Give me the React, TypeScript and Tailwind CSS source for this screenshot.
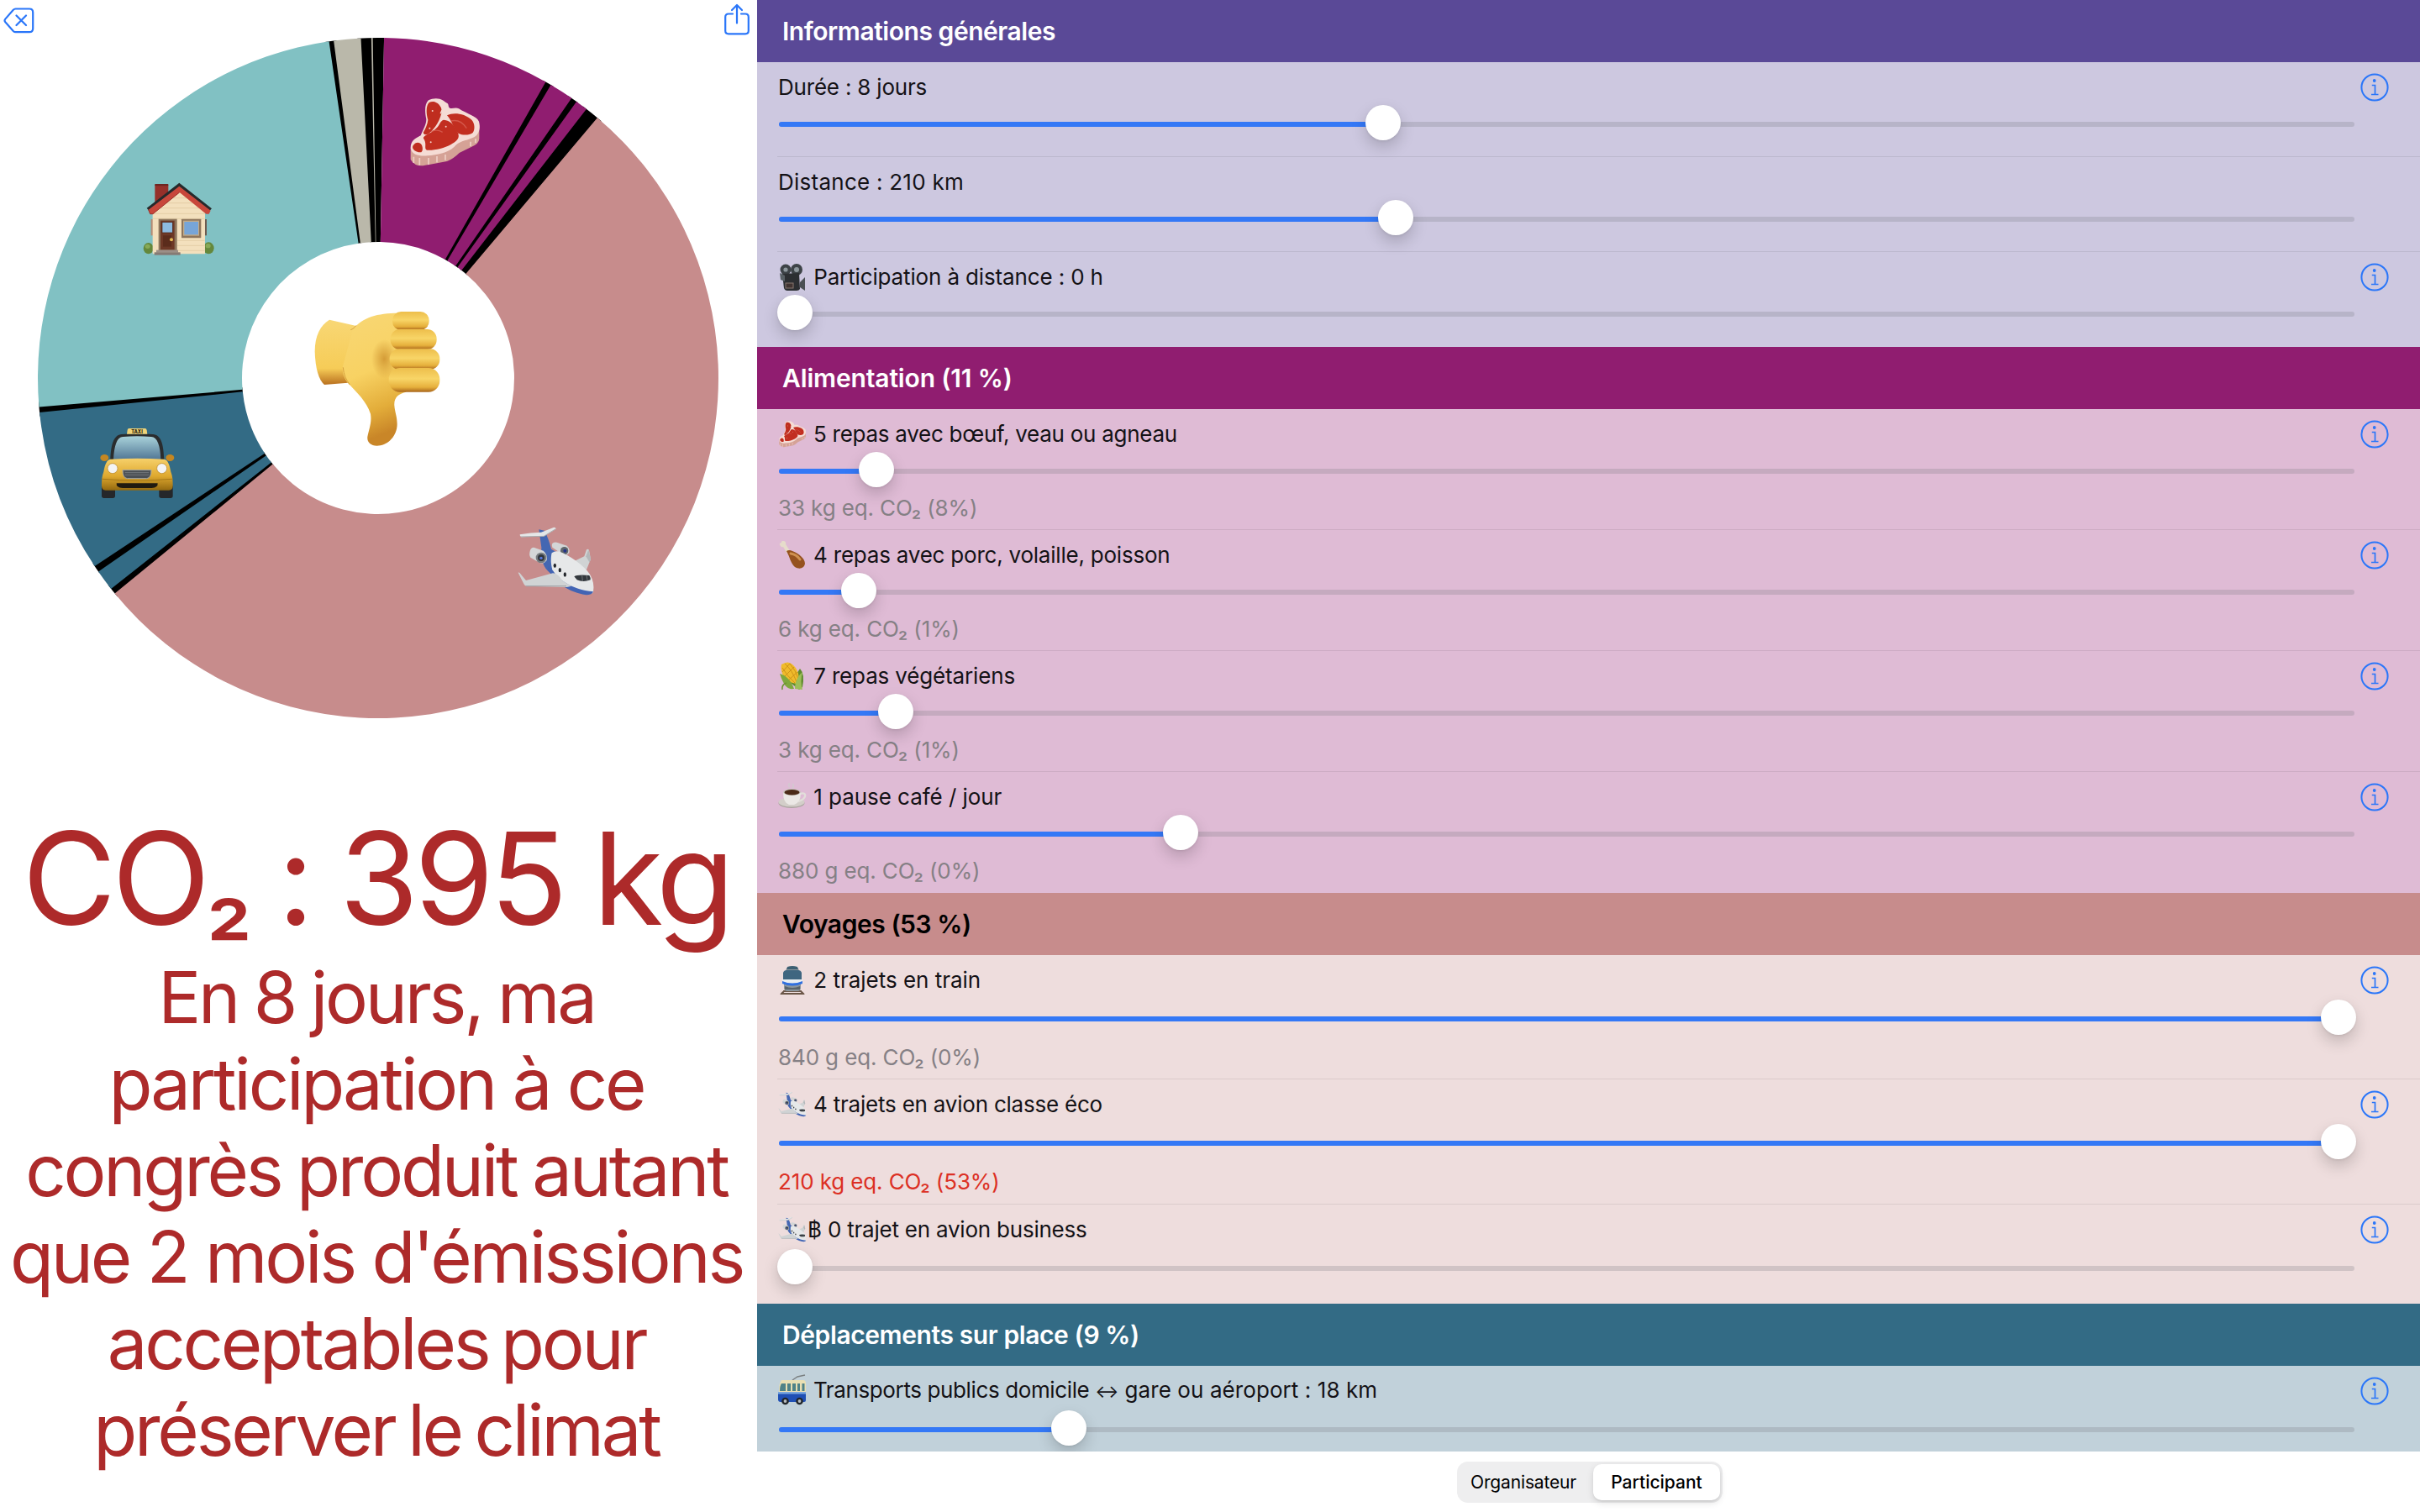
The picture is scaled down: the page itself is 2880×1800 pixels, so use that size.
import type { ReactNode } from 'react';

/* ---------- Emoji artwork ---------- */

function House() {
  return (
    <g>
      <ellipse cx="200" cy="272" rx="18" ry="20" fill="#64883c" />
      <ellipse cx="415" cy="271" rx="19" ry="21" fill="#64883c" />
      <ellipse cx="197" cy="265" rx="9" ry="8" fill="#86a957" />
      <ellipse cx="413" cy="263" rx="9" ry="8" fill="#86a957" />
      <rect x="223" y="42" width="48" height="70" rx="3" fill="#96302a" />
      <rect x="223" y="42" width="48" height="7" rx="3" fill="#6d2521" />
      <path d="M209 168h8v58h-8z" fill="#b58a72" />
      <path d="M401 168h7v58h-7z" fill="#6d5b4f" />
      <path d="M215 292V140L311 62l91 78v152z" fill="#f3e0bd" />
      <path d="M280 92h60M258 110h104M236 128h150M216 148h185M216 166h185M303 244h98M303 262h98M303 280h98" stroke="#dcc59c" strokeWidth="2" />
      <path d="M194 128L310 38l116 92-8 8L310 56 202 138z" fill="#26292b" />
      <path d="M200 134L310 50l112 87-6 12h-10L311 72 216 149h-10z" fill="#c8473b" />
      <path d="M200 134l6 15h10L311 72" fill="none" stroke="#9c2f28" strokeWidth="3" />
      <rect x="236" y="167" width="66" height="112" fill="#8d755c" />
      <rect x="243" y="173" width="50" height="104" fill="#6d3826" />
      <rect x="249" y="179" width="37" height="37" fill="#8dbbe0" stroke="#4e2619" strokeWidth="2" />
      <rect x="252" y="226" width="30" height="40" fill="#5b2c1c" />
      <circle cx="282" cy="241" r="6" fill="#e5bb55" />
      <rect x="228" y="278" width="78" height="9" fill="#9c8f88" />
      <rect x="221" y="286" width="93" height="10" fill="#867a74" />
      <rect x="318" y="167" width="70" height="68" rx="2" fill="#8d755c" />
      <rect x="324" y="173" width="57" height="54" fill="#c5ab86" />
      <rect x="328" y="177" width="50" height="46" fill="#77a5d8" />
    </g>
  );
}

function Taxi() {
  return (
    <g>
      <defs>
        <linearGradient id="taxiGlass" x1="0" y1="0" x2="0" y2="1">
          <stop offset="0" stopColor="#a9d2da" />
          <stop offset="1" stopColor="#517795" />
        </linearGradient>
        <linearGradient id="taxiBody" x1="0" y1="0" x2="0" y2="1">
          <stop offset="0" stopColor="#f6d06a" />
          <stop offset="0.55" stopColor="#dfa92f" />
          <stop offset="1" stopColor="#94690f" />
        </linearGradient>
      </defs>
      <rect x="33" y="1115" width="48" height="49" rx="8" fill="#25272a" />
      <rect x="238" y="1115" width="49" height="49" rx="8" fill="#25272a" />
      <ellipse cx="43" cy="1020" rx="15" ry="12" fill="#c58722" />
      <ellipse cx="277" cy="1020" rx="15" ry="12" fill="#c58722" />
      <path d="M64 1028C66 968 78 938 104 936q56-5 112 0c28 2 38 32 40 92z" fill="#2a2c2e" />
      <path d="M75 1026c3-50 12-80 34-81q50-4 101 0c22 1 32 31 34 81z" fill="url(#taxiGlass)" />
      <path d="M40 1070c4-26 12-44 24-45q96-5 192 0c12 1 20 19 24 45 6 14 7 30 7 50 0 10-5 16-14 16H47c-9 0-14-6-14-16 0-20 1-36 7-50z" fill="url(#taxiBody)" />
      <path d="M34 1096q126 10 252 0" fill="none" stroke="#a87818" strokeWidth="3" />
      <circle cx="72" cy="1058" r="18" fill="#f4f4f4" stroke="#b4832a" strokeWidth="2" />
      <circle cx="248" cy="1058" r="18" fill="#f4f4f4" stroke="#b4832a" strokeWidth="2" />
      <path d="M108 1064h102q0 28-16 30h-70q-16-2-16-30z" fill="#4b5055" stroke="#a2a5a7" strokeWidth="3" />
      <path d="M116 1073h86M117 1081h84" stroke="#85898c" strokeWidth="2" />
      <path d="M86 1111h147q2 16-22 17H108q-24-1-22-17z" fill="#201a10" />
      <path d="M130 915h58q5 0 6 6l2 14h-73l2-14q1-6 5-6z" fill="#f1d478" />
      <text x="159" y="933" textAnchor="middle" fontFamily="Inter, sans-serif" fontSize="17" fontWeight="800" fill="#2b2410">TAXI</text>
    </g>
  );
}

function Steak() {
  return (
    <g>
      <path d="M86 258v42q14 24 44 22l86-16q22-8 44-30l44-22q26-10 27-28v-50l-40 30z" fill="#d5a296" />
      <path d="M97 290v22M118 294v26M150 294v24M180 288v22M210 282v20M300 236v16M318 226v14" stroke="#efcfc6" strokeWidth="5" />
      <path d="M150 88c14-8 40-8 50 0 8 4 10 8 16 10 8 4 2 12 10 18 10 4 20-4 32 2 28 18 66 28 72 46 6 22 2 48-22 58-28 12-50 12-66 32-26 24-60 28-96 32-24 2-56 0-60-28 0-26 18-34 36-44 10-24 20-40 20-58-6-28-6-56 8-68z" fill="#f5dcd5" />
      <path d="M152 96c14-6 34-4 46 26-4 36-24 66-48 86-12 6-20 2-18-6 8-14 14-28 16-44-8-26-6-52 4-62z" fill="#bf2d1f" />
      <path d="M184 92c10 8 16 20 15 30l-6 14" fill="none" stroke="#f5dcd5" strokeWidth="5" />
      <path d="M204 158c24 2 36 18 42 32 22 28 10 42-16 56-24 14-62 22-86 20-12-6 2-22-12-42-4-10 30-18 44-34 14-12 16-30 28-32z" fill="#c22e20" />
      <path d="M216 142c24-12 64-6 88 16 12 14 12 34 4 46-14 10-36 10-52 2-18-18-22-44-40-64z" fill="#c22e20" />
      <path d="M230 162q34-8 56 26M160 200q20-10 40 2" fill="none" stroke="#d4574a" strokeWidth="4" />
      <path d="M98 246c8-10 22-8 28 2 4 10 4 20-2 26-14 0-24-4-30-14-2-6 0-10 4-14z" fill="#bf2d1f" />
      <g fill="#f3cfc7">
        <circle cx="158" cy="238" r="3" />
        <circle cx="212" cy="182" r="3" />
        <circle cx="154" cy="188" r="3" />
        <circle cx="164" cy="126" r="3" />
      </g>
    </g>
  );
}

function Plane() {
  return (
    <g>
      <path d="M172 96q4-6 16-4l36 12q12 12 8 26-10 12-22 6l-38-26q-4-6 0-14z" fill="#d3d5d6" />
      <circle cx="215" cy="122" r="14" fill="#5f666c" />
      <circle cx="217" cy="122" r="6" fill="#25348a" />
      <path d="M252 158l34-16 8-24q6-4 9 2l6 32-16 40z" fill="#d0d3d4" />
      <path d="M292 142l9-24 8 32-4 14z" fill="#b4b8ba" />
      <path d="M124 46l20 4c10 20 18 40 24 66l24 14 12 96-40-24c-22-20-34-42-31-92z" fill="#4467b2" />
      <path d="M56 64q40-8 76-8l46-18q8 2 7 6l-42 26-82 3q-6-4-5-9z" fill="#e4e6e7" />
      <path d="M60 72l82-2 42-26" fill="none" stroke="#a9adb0" strokeWidth="3" />
      <path d="M170 130q10-8 24-6c40 14 90 50 112 82q18 30 12 64-8 10-30 8c-48-12-88-44-116-88-6-22-6-44-2-60z" fill="#e6e8e9" />
      <path d="M160 178c28 44 80 84 158 90q-4 12-24 12c-60-8-116-44-138-96z" fill="#4264b4" />
      <path d="M50 200q4-2 6 2l22 26 96-26q16 0 36 28l30 18-16 4-144-4q-8-2-10-8z" fill="#d0d3d4" />
      <path d="M78 248h144" stroke="#a4a8ab" strokeWidth="4" />
      <path d="M250 214q10-8 54-4 6 10 4 16-26 10-48 0z" fill="#33383d" />
      <path d="M278 210l2 20M294 209l3 18" stroke="#8c9194" strokeWidth="2" />
      <g fill="#23272c">
        <ellipse cx="181" cy="175" rx="5" ry="8" />
        <ellipse cx="199" cy="191" rx="5" ry="8" />
        <ellipse cx="217" cy="207" rx="5" ry="8" />
      </g>
      <path d="M92 124q2-14 14-14l34 12q16 14 12 34-10 14-24 10l-34-20q-6-8-2-22z" fill="#d4d7d8" />
      <circle cx="132" cy="147" r="19" fill="#777d81" />
      <circle cx="132" cy="147" r="12" fill="#30363d" />
      <circle cx="132" cy="148" r="5" fill="#5777dd" />
    </g>
  );
}

function ThumbDown() {
  return (
    <g>
      <defs>
        <linearGradient id="hand" x1="0" y1="0" x2="0.2" y2="1">
          <stop offset="0" stopColor="#f8d775" />
          <stop offset="0.5" stopColor="#f8d263" />
          <stop offset="0.8" stopColor="#e3ad3a" />
          <stop offset="1" stopColor="#c98628" />
        </linearGradient>
        <linearGradient id="cuff" x1="0" y1="0" x2="0" y2="1">
          <stop offset="0" stopColor="#f8d775" />
          <stop offset="0.75" stopColor="#f6cc57" />
          <stop offset="1" stopColor="#b9701f" />
        </linearGradient>
        <linearGradient id="finger" x1="0" y1="0" x2="0" y2="1">
          <stop offset="0" stopColor="#edbe4b" />
          <stop offset="0.45" stopColor="#f8d567" />
          <stop offset="0.8" stopColor="#e6b03c" />
          <stop offset="1" stopColor="#a9661b" />
        </linearGradient>
        <radialGradient id="palmShade">
          <stop offset="0" stopColor="#c98a28" stopOpacity="0.75" />
          <stop offset="1" stopColor="#c98a28" stopOpacity="0" />
        </radialGradient>
      </defs>
      <path d="M156 122l96 22v200l-30 3-84 7c-20-18-32-58-34-118 0-58 20-94 52-114z" fill="url(#cuff)" />
      <path d="M240 156C276 112 330 97 410 98l20 282c-28 6-44 20-42 48 2 24 10 40 10 66 0 44-34 78-72 78-24 0-36-14-34-32 6-30 16-50 11-82-14-44-50-78-81-110-18-24-20-40-18-60z" fill="url(#hand)" />
      <path d="M252 142c-6 8-12 13-20 16M205 292c2 26 10 44 24 62" fill="none" stroke="#c78b2c" strokeWidth="3" opacity="0.7" />
      <ellipse cx="352" cy="262" rx="46" ry="70" fill="url(#palmShade)" />
      <rect x="381" y="93" width="131" height="66" rx="31" fill="url(#finger)" />
      <rect x="374" y="156" width="165" height="72" rx="34" fill="url(#finger)" />
      <rect x="371" y="226" width="179" height="74" rx="35" fill="url(#finger)" />
      <rect x="368" y="294" width="182" height="86" rx="40" fill="url(#finger)" />
    </g>
  );
}

function Camera() {
  return (
    <svg viewBox="0 0 34 34" className="h-[34px] w-[34px]">
      <circle cx="9" cy="8" r="6.5" fill="#3d4347" />
      <circle cx="22" cy="8" r="7" fill="#3d4347" />
      <circle cx="9" cy="8" r="2.6" fill="#8d979c" />
      <circle cx="22" cy="8" r="3" fill="#8d979c" />
      <path d="M5 13l20-1 1 19q-1 2-4 2H11q-3 0-4-3z" fill="#2c2f32" />
      <path d="M2 12l6 3v7l-5-2z" fill="#596166" />
      <path d="M26 23l6-6v16l-6-4z" fill="#4a5054" />
      <rect x="9" y="24" width="9" height="6" fill="#413432" stroke="#86766f" />
    </svg>
  );
}

function Drumstick() {
  return (
    <svg viewBox="0 0 34 34" className="h-[34px] w-[34px]">
      <path d="M3 6q-3-3 1-4 0-3 3-2 3 1 2 4l6 9-4 2-5-8q-2 1-3-1z" fill="#e6dccb" />
      <path d="M10 12q3-2 7 0c8 3 15 9 15 15-1 6-7 7-12 4-5-4-6-12-10-19z" fill="#95521f" />
      <path d="M15 15q7 1 11 7" fill="none" stroke="#cf9150" strokeWidth="3" strokeLinecap="round" />
    </svg>
  );
}

function Corn() {
  return (
    <svg viewBox="0 0 34 34" className="h-[34px] w-[34px]">
      <path d="M26 8q6 6 3 22l-4 3-10-8z" fill="#5f8b2d" />
      <path d="M4 3q8-5 13 0c7 6 9 14 7 23-9 0-17-5-19-12-1-4-2-7-1-11z" fill="#f0bb2b" />
      <path d="M8 2q9 8 14 22M5 7q6 10 15 18M14 2q7 8 10 18M5 12l9-10M7 18L19 6M12 22l11-10" stroke="#c98f17" strokeWidth="0.9" fill="none" />
      <path d="M2 14c7 2 13 7 17 18-8 1-12-3-17-18z" fill="#7fa83c" />
      <path d="M29 12c-6 5-9 12-9 20l9 1q-3-10 0-21z" fill="#9dbe58" />
      <path d="M10 25q-6 2-5 8" fill="none" stroke="#6f8f36" strokeWidth="1.6" />
    </svg>
  );
}

function Coffee() {
  return (
    <svg viewBox="0 0 34 34" className="h-[34px] w-[34px]">
      <path d="M14 5q-3-2 0-5M17 6q3-2 0-5" stroke="#d3c9d0" strokeWidth="1.6" fill="none" />
      <ellipse cx="16" cy="24" rx="15.500" ry="6" fill="#aaa49f" />
      <ellipse cx="16" cy="23" rx="15.500" ry="5.500" fill="#d3cec9" />
      <path d="M26 13q7-2 6 3-1 4-8 6" fill="none" stroke="#e2deda" strokeWidth="2.400" />
      <path d="M6 11q0 13 7 15h6q8-2 8-15z" fill="#ebe8e5" />
      <ellipse cx="16.500" cy="11" rx="10.500" ry="4" fill="#c9c3bd" />
      <ellipse cx="16.500" cy="11.300" rx="9" ry="3.200" fill="#4b2a18" />
    </svg>
  );
}

function Train() {
  return (
    <svg viewBox="0 0 34 34" className="h-[34px] w-[34px]">
      <path d="M7 30l-4 4M27 30l4 4M4 33h26M6 30h22" stroke="#6b5647" strokeWidth="2" />
      <path d="M10 3q7-4 14 0l3 8v15q0 4-4 4H11q-4 0-4-4V11z" fill="#8b969d" />
      <path d="M11 1q6-2 12 0l1 3H10z" fill="#3c5f72" />
      <path d="M6 8q1-3 4-3h14q3 0 4 3v8H6z" fill="#3f6680" />
      <path d="M5 16h24v3q-12 5-24 0z" fill="#e9eef2" />
      <path d="M5 18q12 5 24 0v3q-12 5-24 0z" fill="#2f6fe0" />
      <path d="M8 24q9 4 18 0v4H8z" fill="#59636a" />
    </svg>
  );
}

function Trolleybus() {
  return (
    <svg viewBox="0 0 34 34" className="h-[34px] w-[34px] overflow-visible">
      <path d="M17 4l6-4 9-2" fill="none" stroke="#7b8082" strokeWidth="1.400" />
      <path d="M4 4h26q3 0 3 4v10H1q0-10 3-14z" fill="#e9dfb3" />
      <path d="M4 8h5v9H2q0-6 2-9zM11 8h4v9h-4zM17 8h4v9h-4zM23 8h3v9h-3zM28.500 8h3v9h-3z" fill="#4f8288" />
      <path d="M0 18h33v10q0 2-2 2H3q-3 0-3-3z" fill="#1f4fb4" />
      <path d="M0 18h33v2.500H0z" fill="#79a5de" />
      <circle cx="8.500" cy="29" r="4.300" fill="#22262a" />
      <circle cx="25.500" cy="29" r="4.300" fill="#22262a" />
      <circle cx="8.500" cy="29" r="1.900" fill="#b7bcc0" />
      <circle cx="25.500" cy="29" r="1.900" fill="#b7bcc0" />
    </svg>
  );
}

const SmallSteak = () => (
  <svg viewBox="76 72 264 264" className="h-[34px] w-[34px]">
    <Steak />
  </svg>
);
const SmallPlane = () => (
  <svg viewBox="46 24 278 278" className="h-[34px] w-[34px]">
    <Plane />
  </svg>
);

/* ---------- Pie ---------- */

const CX = 450;
const CY = 450;
const R_OUT = 405;
const R_IN = 162;

const slices = [
  { from: 1, to: 29.5, color: '#901d70' },
  { from: 30.5, to: 34.65, color: '#901d70' },
  { from: 35.65, to: 37.75, color: '#901d70' },
  { from: 40.1, to: 230.7, color: '#c78c8c' },
  { from: 231.7, to: 235.3, color: '#336b85' },
  { from: 236.4, to: 264.2, color: '#336b85' },
  { from: 265.1, to: 351.7, color: '#81c1c3' },
  { from: 352.5, to: 357.1, color: '#bab8aa' },
  { from: 358.85, to: 359.1, color: '#bab8aa' },
];

function point(r: number, deg: number) {
  const a = (deg * Math.PI) / 180;
  return `${(CX + r * Math.sin(a)).toFixed(2)} ${(CY - r * Math.cos(a)).toFixed(2)}`;
}

function wedge(from: number, to: number) {
  const large = to - from > 180 ? 1 : 0;
  return `M${point(R_OUT, from)}A${R_OUT} ${R_OUT} 0 ${large} 1 ${point(R_OUT, to)}L${point(R_IN, to)}A${R_IN} ${R_IN} 0 ${large} 0 ${point(R_IN, from)}Z`;
}

const gaps: [number, number][] = [
  [29, 31],
  [34, 36],
  [37, 41],
  [230, 232.5],
  [235, 237],
  [263.5, 266],
  [351, 353],
  [356.5, 361],
];

function Pie() {
  return (
    <svg viewBox="45 45 810 810" className="mx-[45px] block h-[810px] w-[810px]">
      {gaps.map(([a, b]) => (
        <path key={a} d={wedge(a, b)} fill="#000" />
      ))}
      {slices.map((s) => (
        <path key={s.from} d={wedge(s.from, s.to)} fill={s.color} />
      ))}
      <g transform="translate(110 205) scale(0.3333)">
        <House />
        <Taxi />
      </g>
      <g transform="translate(460 90) scale(0.3333)">
        <Steak />
      </g>
      <g transform="translate(600 615) scale(0.3333)">
        <Plane />
      </g>
      <g transform="translate(340 340) scale(0.3333)">
        <ThumbDown />
      </g>
    </svg>
  );
}

/* ---------- Controls ---------- */

function InfoIcon() {
  return (
    <svg viewBox="0 0 34 34" className="h-[34px] w-[34px]" fill="none" stroke="#2a76f9" strokeWidth="2">
      <circle cx="17" cy="17" r="15.600" />
      <circle cx="16.700" cy="9" r="1.900" fill="#2a76f9" stroke="none" />
      <path d="M13.800 14.500H17.500V25.500M13 25.500h8.500" strokeWidth="1.700" />
    </svg>
  );
}

function Slider({ value }: { value: number }) {
  return (
    <div className="relative h-[42px] w-[1878px] pt-[20px] pl-[2px]">
      <div className="h-[6px] w-[1875px] overflow-hidden rounded-full bg-[#78788040]">
        <div className="h-full bg-[#3478f6]" style={{ width: value }} />
      </div>
      <div
        className="absolute top-0 h-[42px] w-[42px] -translate-x-1/2 rounded-full bg-white shadow-[0_8px_18px_rgba(0,0,0,0.18),0_1px_3px_rgba(0,0,0,0.08)]"
        style={{ left: value + 1 }}
      />
    </div>
  );
}

type RowData = {
  id: string;
  icon?: ReactNode;
  text: ReactNode;
  value: number;
  note?: string;
  alert?: boolean;
  info?: boolean;
  height: string;
  tracking?: string;
};

function Row({ row, roomy, last }: { row: RowData; roomy?: boolean; last: boolean }) {
  return (
    <div className={`flex ${row.height} pl-[24px]`}>
      <div className={`flex flex-1 items-start ${last ? '' : 'border-b border-black/8'}`}>
        <div className="w-[1878px] pt-[12px]">
          <div
            className={`flex h-[36px] items-center pl-px text-[26px] leading-[36px] whitespace-pre text-[#141216] ${row.tracking ?? 'tracking-[-0.22px]'}`}
          >
            {row.icon && <span className="mr-[1px] block shrink-0">{row.icon}</span>}
            <span>{row.text}</span>
          </div>
          <div className={roomy ? 'mt-[5px]' : 'mt-[3px]'}>
            <Slider value={row.value} />
          </div>
          {row.note && (
            <div
              className={`${roomy ? 'mt-[9px]' : 'mt-[7px]'} pl-px text-[26px] leading-[36px] tracking-[-0.12px] ${row.alert ? 'text-[#dc3024]' : 'text-[#858085]'}`}
            >
              {row.note}
            </div>
          )}
        </div>
        {row.info !== false && (
          <div className="mt-[13px] ml-[6px]">
            <InfoIcon />
          </div>
        )}
      </div>
    </div>
  );
}

type SectionData = { title: string; head: string; body: string; roomy?: boolean; rows: RowData[] };

const sections: SectionData[] = [
  {
    title: 'Informations générales',
    head: 'bg-[#5a4997] text-white tracking-[-0.45px]',
    body: 'bg-[#cdc8e0]',
    rows: [
      { id: 'duration', text: 'Durée : 8 jours', value: 720, height: 'h-[113px]', tracking: 'tracking-[-0.2px]' },
      { id: 'distance', text: 'Distance : 210 km', value: 735, info: false, height: 'h-[113px]', tracking: 'tracking-[0.25px]' },
      { id: 'remote', icon: <Camera />, text: ' Participation à distance : 0 h', value: 20, height: 'h-[113px]', tracking: 'tracking-[-0.14px]' },
    ],
  },
  {
    title: 'Alimentation (11 %)',
    head: 'bg-[#901d70] text-white tracking-[-0.15px]',
    body: 'bg-[#dfbbd5]',
    rows: [
      { id: 'beef', icon: <SmallSteak />, text: ' 5 repas avec bœuf, veau ou agneau', value: 117, note: '33 kg eq. CO₂ (8%)', height: 'h-[144px]', tracking: 'tracking-[-0.27px]' },
      { id: 'poultry', icon: <Drumstick />, text: ' 4 repas avec porc, volaille, poisson', value: 96, note: '6 kg eq. CO₂ (1%)', height: 'h-[144px]' },
      { id: 'veggie', icon: <Corn />, text: ' 7 repas végétariens', value: 140, note: '3 kg eq. CO₂ (1%)', height: 'h-[144px]', tracking: 'tracking-[-0.15px]' },
      { id: 'coffee', icon: <Coffee />, text: ' 1 pause café / jour', value: 479, note: '880 g eq. CO₂ (0%)', height: 'h-[144px]', tracking: 'tracking-[-0.05px]' },
    ],
  },
  {
    title: 'Voyages (53 %)',
    head: 'bg-[#c78c8c] text-black tracking-[-0.45px]',
    body: 'bg-[#eedddd]',
    roomy: true,
    rows: [
      { id: 'train', icon: <Train />, text: ' 2 trajets en train', value: 1857, note: '840 g eq. CO₂ (0%)', height: 'h-[148px]', tracking: 'tracking-[-0.02px]' },
      { id: 'eco', icon: <SmallPlane />, text: ' 4 trajets en avion classe éco', value: 1857, note: '210 kg eq. CO₂ (53%)', alert: true, height: 'h-[149px]' },
      { id: 'business', icon: <SmallPlane />, text: '฿ 0 trajet en avion business', value: 20, height: 'h-[118px]' },
    ],
  },
  {
    title: 'Déplacements sur place (9 %)',
    head: 'bg-[#336b85] text-white tracking-[-0.4px]',
    body: 'bg-[#c1d1da]',
    roomy: true,
    rows: [
      {
        id: 'transit',
        icon: <Trolleybus />,
        text: (
          <>
            <span className="tracking-[-0.38px]"> Transports publics domicile </span>
            <span className="text-[21px]">↔</span>
            <span className="tracking-[0.08px]"> gare ou aéroport : 18 km</span>
          </>
        ),
        value: 346,
        height: 'h-[149px]',
      },
    ],
  },
];

export default function App() {
  return (
    <div className="flex h-[1800px] w-[2880px] overflow-hidden bg-white font-[Inter,'Liberation_Sans',sans-serif]">
      <aside className="flex w-[901px] shrink-0 flex-col">
        <div className="flex h-[45px] items-start justify-between pr-[8px] pl-[4px]">
          <svg viewBox="0 0 38 32" className="mt-[8px] h-[32px] w-[38px]" fill="none" stroke="#2a76f9" strokeWidth="2.200" strokeLinecap="round" strokeLinejoin="round">
            <path d="M14.500 2.500H31q4.200 0 4.200 4.200V26q0 4.200-4.200 4.200H14.500q-1.500 0-2.700-1.200L2.300 18.200q-1.500-1.800 0-3.600L11.800 3.700Q13 2.500 14.500 2.500zM15.500 10.500l11.500 11.500M27 10.500L15.500 22" />
          </svg>
          <svg viewBox="0 0 32 40" className="mt-[3px] h-[40px] w-[32px]" fill="none" stroke="#2a76f9" strokeWidth="2.200" strokeLinecap="round" strokeLinejoin="round">
            <path d="M11 13.500H6q-3.800 0-3.800 3.800V33.500q0 3.800 3.800 3.800H26q3.800 0 3.800-3.800V17.300q0-3.800-3.800-3.800H21M16 24.500V3.500M10 9l6-6 6 6" />
          </svg>
        </div>
        <Pie />
        <div className="mt-[100px] pr-[5px] text-center whitespace-nowrap text-[#ad2a2a]">
          <div className="h-[181px] text-[153px] leading-[181px] tracking-[-5.2px] [word-spacing:-3px]">
            CO<span className="text-[124px] leading-none font-medium">₂</span> : 395 kg
          </div>
          <div className="text-[85px] leading-[103.1px] tracking-[-3.25px]">
            <div className="[word-spacing:-2px]">En 8 jours, ma</div>
            <div>participation à ce</div>
            <div className="[word-spacing:-2px]">congrès produit autant</div>
            <div>que 2 mois d'émissions</div>
            <div className="[word-spacing:-6px]">acceptables pour</div>
            <div className="[word-spacing:-5px]">préserver le climat</div>
          </div>
        </div>
      </aside>
      <main className="flex flex-1 flex-col">
        <div className="h-[1728px] shrink-0 overflow-hidden">
          {sections.map((s) => (
            <section key={s.title}>
              <h2 className={`h-[74px] pl-[30px] text-[30px] leading-[74px] font-semibold ${s.head}`}>{s.title}</h2>
              <div className={s.body}>
                {s.rows.map((row, i) => (
                  <Row key={row.id} row={row} roomy={s.roomy} last={i === s.rows.length - 1} />
                ))}
              </div>
            </section>
          ))}
        </div>
        <div className="flex justify-center pt-[12px] pl-[3px]">
          <div className="flex h-[49px] w-[316px] rounded-[13px] bg-[#eeeeef] p-[3px] text-[21px] leading-[44px] text-black">
            <div className="w-[159px] pl-[13px] tracking-[-0.15px]">Organisateur</div>
            <div className="w-[151px] rounded-[10px] bg-white text-center font-medium shadow-[0_3px_8px_rgba(0,0,0,0.12),0_2px_2px_rgba(0,0,0,0.05)]">Participant</div>
          </div>
        </div>
      </main>
    </div>
  );
}
